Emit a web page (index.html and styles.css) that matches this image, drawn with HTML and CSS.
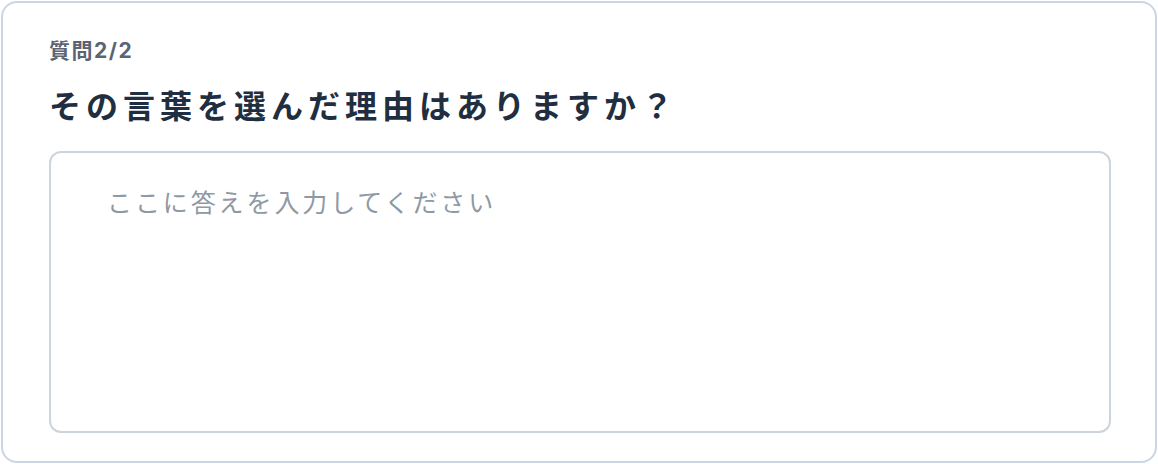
FILE: index.html
```html
<!DOCTYPE html>
<html lang="ja">
<head>
<meta charset="utf-8">
<link rel="stylesheet" href="styles.css">
</head>
<body>
<div class="card">
  <div class="label">質問2/2</div>
  <h2 class="title">その言葉を選んだ理由はありますか？</h2>
  <textarea class="answer" placeholder="ここに答えを入力してください"></textarea>
</div>
</body>
</html>
```
FILE: styles.css
```css
html, body {
  margin: 0;
  padding: 0;
  background: #ffffff;
}
body {
  padding: 1px;
  font-family: "Inter", "Noto Sans CJK JP", sans-serif;
}
.card {
  box-sizing: border-box;
  width: 1156px;
  height: 462px;
  border: 2px solid #cad6e5;
  border-radius: 16px;
  padding: 34px 46px 28px 46px;
  display: flex;
  flex-direction: column;
}
.label {
  font-size: 21px;
  line-height: 28px;
  font-weight: 700;
  letter-spacing: 1.5px;
  color: #5a6474;
}
.title {
  margin: 20px 0 0 0;
  font-size: 32px;
  line-height: 44px;
  font-weight: 700;
  letter-spacing: 5px;
  color: #1f2e40;
}
.answer {
  margin-top: 22px;
  box-sizing: border-box;
  width: 1062px;
  height: 282px;
  border: 2px solid #cdd4dc;
  border-radius: 12px;
  padding: 32px 56px;
  font-family: "Inter", "Noto Sans CJK JP", sans-serif;
  font-size: 25px;
  line-height: 36px;
  letter-spacing: 2.9px;
  color: #1f2e40;
  resize: none;
  outline: none;
  background: #fff;
}
.answer::placeholder {
  color: #8e99a6;
}
```
